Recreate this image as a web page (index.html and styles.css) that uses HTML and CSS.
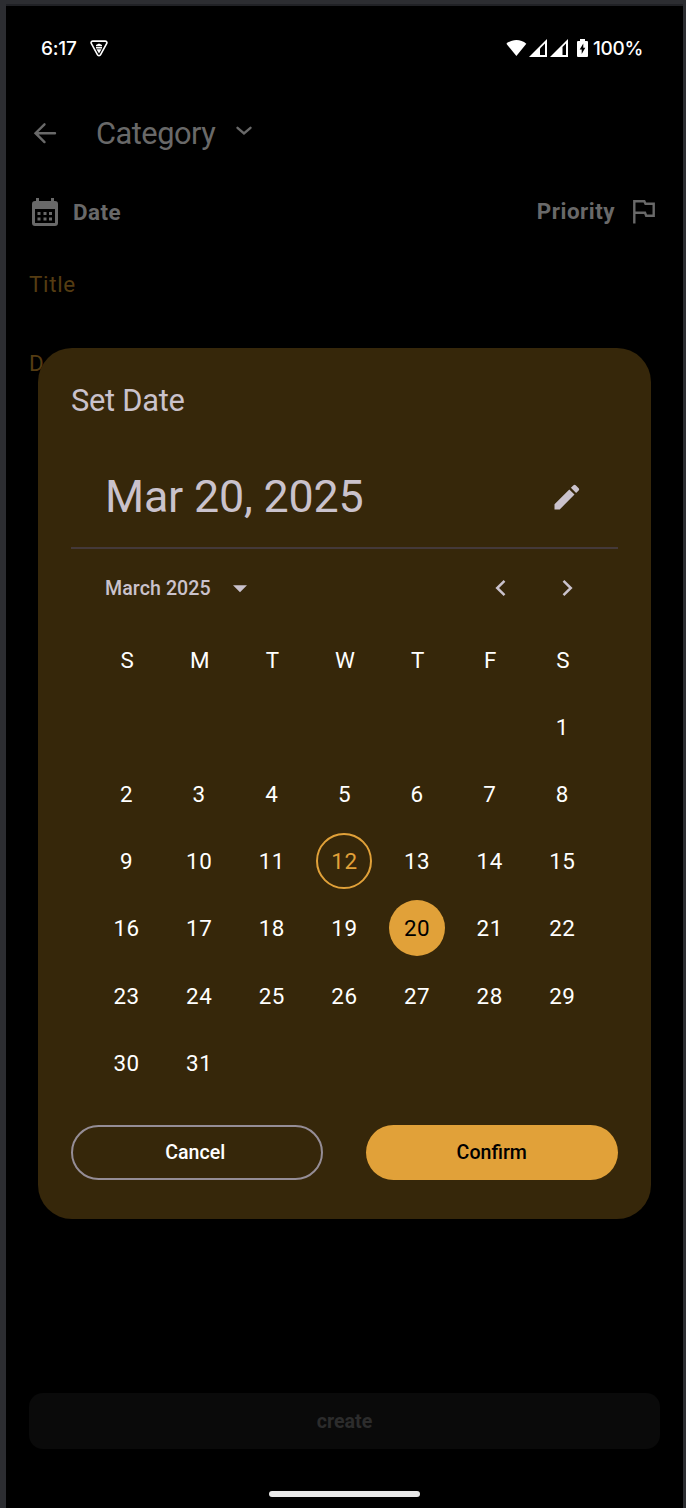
FILE: index.html
```html
<!DOCTYPE html>
<html lang="en">
<head>
<meta charset="utf-8">
<title>Set Date</title>
<link rel="stylesheet" href="styles.css">
</head>
<body>
<div class="frame">
  <div class="screen">
    <div class="status-bar">
      <div class="status-left">
        <span class="clock">6:17</span>
        <svg class="shield" width="18" height="17" viewBox="0 0 18 17"><path d="M3 1.1h12c1.6 0 2.4 1.300 1.600 2.600l-6 11c-.7 1.400-2.500 1.400-3.200 0l-6-11C.6 2.400 1.400 1.100 3 1.100z" fill="none" stroke="#fff" stroke-width="1.600"/><path d="M6 5l3-1.500L12 5v1H6zM6 6.800h6v1.700H6zM6.500 9.200h5L9 13.500z" fill="#fff"/></svg>
      </div>
      <div class="status-right">
        <svg width="21" height="18" viewBox="0 0 21 18"><path d="M.4 4.700C6-.3 14.700-.3 20.300 4.700L10.400 17z" fill="#fff"/></svg>
        <svg class="signal" width="18" height="18" viewBox="0 0 18 18"><path d="M0 18L18 0v18z" fill="#fff"/><path d="M11 9.500l5-5V16h-5z" fill="#000"/></svg>
        <svg class="signal-two" width="18" height="18" viewBox="0 0 18 18"><path d="M0 18L18 0v18z" fill="#fff"/><path d="M12.500 8l3.500-3.500V16h-3.500z" fill="#000"/></svg>
        <svg class="battery" width="11" height="18" viewBox="0 0 11 18"><path d="M3 0h5v2h2q1 0 1 1v14q0 1-1 1H1q-1 0-1-1V3q0-1 1-1h2z" fill="#fff"/><path d="M6.300 4.500v4.300h2L4.700 15v-4.500h-2z" fill="#000"/></svg>
        <span class="percent">100%</span>
      </div>
    </div>
    <div class="top-bar">
      <svg width="24" height="24" viewBox="0 0 24 24"><path d="M11.500 3.300l-9 8.900 9 8.900M3 12.200h19" class="line-gray"/></svg>
      <span class="category">Category</span>
      <svg class="chevron-down" width="18" height="12" viewBox="0 0 18 12"><path d="M2.500 2.800L9 8.500l6.500-5.700" class="line-gray"/></svg>
    </div>
    <div class="meta-row">
      <svg width="26" height="28" viewBox="0 0 26 28"><path fill="#696969" fill-rule="evenodd" d="M4 0h3v3h12V0h3v3h1q3 0 3 3v19q0 3-3 3H3q-3 0-3-3V6q0-3 3-3h1zM3 11v14h20V11zM5.500 14h3v3h-3zM11.500 14h3v3h-3zM17 14h3v3h-3zM5.500 19.500h3v3h-3zM11.500 19.500h3v3h-3zM17 19.500h3v3h-3z"/></svg>
      <span class="meta-label">Date</span>
      <span class="meta-label priority">Priority</span>
      <svg class="flag" width="22" height="24" viewBox="0 0 22 24"><path d="M1.300 23.500V1.300h10l1.200 2.500h8.200v11.900h-7.500l-1.200-3H1.300" fill="none" stroke="#696969" stroke-width="2.400"/></svg>
    </div>
    <div class="field field-title">Title</div>
    <div class="field field-desc">Description</div>
    <div class="create">create</div>
    <div class="home-bar"></div>

    <section class="dialog">
      <h1 class="dialog-title">Set Date</h1>
      <div class="headline">
        <span>Mar 20, 2025</span>
        <svg width="26" height="26" viewBox="0 0 26 26"><path fill="#cac2cc" d="M.5 20.200L15.300 5.400l5.200 5.200L5.700 25.400H.5zM16.900 3.800L19.500 1.200q1.100-1 2.200 0l3 3q1 1.100 0 2.200l-2.600 2.600z"/></svg>
      </div>
      <div class="month-row">
        <span class="month">March 2025</span>
        <svg class="caret" width="14" height="8" viewBox="0 0 14 8"><path d="M0 .3h14l-7 7z" fill="#cac2cc"/></svg>
        <svg class="prev" width="11" height="18" viewBox="0 0 11 18"><path d="M9.500 1.800L2.200 9l7.300 7.200" class="line-light"/></svg>
        <svg class="next" width="11" height="18" viewBox="0 0 11 18"><path d="M1.500 1.800L8.800 9l-7.300 7.200" class="line-light"/></svg>
      </div>
      <div class="calendar">
        <span class="weekday">S</span><span class="weekday">M</span><span class="weekday">T</span><span class="weekday">W</span><span class="weekday">T</span><span class="weekday">F</span><span class="weekday">S</span>
        <span class="day first-saturday">1</span>
        <span class="day">2</span><span class="day">3</span><span class="day">4</span><span class="day">5</span><span class="day">6</span><span class="day">7</span><span class="day">8</span>
        <span class="day">9</span><span class="day">10</span><span class="day">11</span><span class="day today">12</span><span class="day">13</span><span class="day">14</span><span class="day">15</span>
        <span class="day">16</span><span class="day">17</span><span class="day">18</span><span class="day">19</span><span class="day selected">20</span><span class="day">21</span><span class="day">22</span>
        <span class="day">23</span><span class="day">24</span><span class="day">25</span><span class="day">26</span><span class="day">27</span><span class="day">28</span><span class="day">29</span>
        <span class="day">30</span><span class="day">31</span>
      </div>
      <div class="actions">
        <div class="button cancel">Cancel</div>
        <div class="button confirm">Confirm</div>
      </div>
    </section>
  </div>
</div>
</body>
</html>
```
FILE: styles.css
```css
* { box-sizing: border-box; }
body { margin: 0; background: #2c2d31; font-family: Roboto, sans-serif; }
svg { display: block; flex: none; }
.frame { height: 1508px; padding: 4px 3px 0 6px; background: #2c2d31; }
.screen { position: relative; display: flex; flex-direction: column; height: 1504px; background: #000; border-top: 2px solid #202125; }
.line-gray { fill: none; stroke: #696969; stroke-width: 2.4; stroke-linecap: round; }
.line-light { fill: none; stroke: #cac2cc; stroke-width: 2.5; }

.status-bar { display: flex; justify-content: space-between; height: 84px; padding: 0 41px 0 35px; color: #fff; font-family: Inter, sans-serif; }
.status-left, .status-right { display: flex; align-items: center; height: 84px; }
.clock { width: 49px; font-size: 19px; font-weight: 500; letter-spacing: -0.2px; white-space: nowrap; }
.signal { margin-left: 2px; }
.signal-two { margin-left: 3px; }
.battery { margin: 0 6px 0 9px; }
.percent { width: 49px; font-size: 19px; font-weight: 500; letter-spacing: -0.3px; white-space: nowrap; }
.status-right > svg { transform: translateX(1px); }

.top-bar { display: flex; align-items: center; height: 86px; padding-left: 27px; }
.category { margin: 1px 20px 0 39px; color: #696969; font-size: 30.8px; line-height: 40px; letter-spacing: -0.5px; }
.chevron-down { margin-bottom: 4px; }
.meta-row { display: flex; align-items: center; height: 72px; padding: 0 28px 0 26px; }
.meta-label { margin-left: 15px; color: #696969; font-size: 22.4px; font-weight: 700; letter-spacing: 0.5px; }
.priority { margin-left: auto; padding-bottom: 2px; }
.flag { margin-left: 18px; }
.field { padding-left: 23px; color: #553c12; font-size: 22.4px; line-height: 34px; letter-spacing: 0.7px; }
.field-title { margin-top: 19px; }
.field-desc { margin-top: 45px; }
.create { height: 56px; margin: 1013px 23px 0; border-radius: 14px; background: #0a0a0a; color: #2c2c2c; font-size: 19.6px; font-weight: 700; line-height: 57px; text-align: center; letter-spacing: 0; }
.home-bar { width: 151px; height: 6px; margin: 42px auto 0 263px; border-radius: 3px; background: #e9e9e9; }

.dialog { position: absolute; left: 31.5px; top: 342px; width: 613.5px; height: 870.5px; padding: 33px 33.5px 0; border-radius: 34px; background: #36270a; color: #cac2cc; }
.dialog-title { margin: 0; font-size: 30.8px; font-weight: 400; line-height: 40px; letter-spacing: -0.25px; }
.headline { display: flex; align-items: center; justify-content: space-between; height: 128px; padding: 25px 37.5px 0 34px; border-bottom: 2px solid #44393a; font-size: 44.8px; letter-spacing: -0.2px; }
.month-row { display: flex; align-items: center; height: 78px; padding: 0 45px 0 34px; }
.month { font-size: 19.6px; font-weight: 500; letter-spacing: 0.08px; }
.caret { margin-left: 22px; margin-top: 2px; }
.prev { margin-left: auto; }
.next { margin-left: 56px; }
.calendar { display: grid; grid-template-columns: repeat(7, 72.65px); grid-auto-rows: 67.2px; margin: -1px 0 0 19px; color: #fff; font-size: 22.4px; letter-spacing: 0.5px; }
.weekday, .day { display: flex; align-items: center; justify-content: center; }
.weekday { padding-left: 2px; }
.day { width: 56px; height: 56px; margin: 5.6px 8.5px; border-radius: 50%; }
.first-saturday { grid-column: 7; }
.today { border: 2px solid #e1a139; color: #e1a139; }
.selected { background: #e1a139; color: #000; }
.actions { display: flex; justify-content: space-between; margin-top: 28.5px; }
.button { width: 251.5px; height: 55px; border-radius: 28px; font-size: 19.6px; font-weight: 500; line-height: 51px; text-align: center; letter-spacing: 0; }
.cancel { padding-right: 3px; border: 2px solid #958d96; color: #fff; }
.confirm { background: #e1a139; color: #000; line-height: 55px; }
```
